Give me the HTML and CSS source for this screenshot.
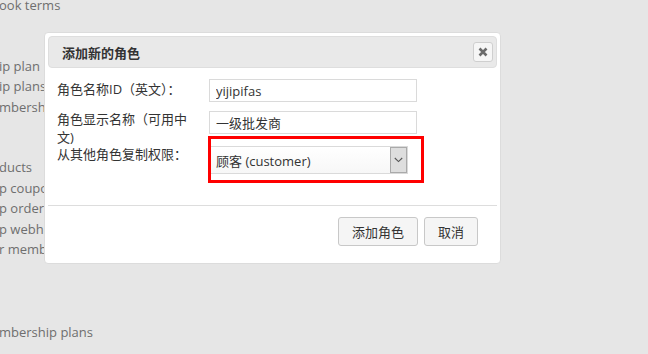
FILE: index.html
```html
<!DOCTYPE html>
<html lang="zh">
<head>
<meta charset="utf-8">
<title>添加新的角色</title>
<link rel="stylesheet" href="styles.css">
</head>
<body>
<ul class="bg-menu">
  <li class="m0">ook terms</li>
  <li class="m1">ip plan</li>
  <li>ip plans</li>
  <li>mbership</li>
  <li class="m2">ducts</li>
  <li>p coupo</li>
  <li>p order</li>
  <li>p webho</li>
  <li>r memb</li>
  <li class="m3">mbership plans</li>
</ul>

<div class="dialog">
  <div class="titlebar">
    <span class="title">添加新的角色</span>
    <button class="close" aria-label="close">
      <svg width="10" height="10" viewBox="0 0 10 10"><path d="M1.5 1.5 L8.5 8.5 M8.5 1.5 L1.5 8.5" stroke="#6b6b6b" stroke-width="2.6" stroke-linecap="butt"/></svg>
    </button>
  </div>
  <div class="content">
    <div class="row r1">
      <label class="lbl">角色名称ID（英文）：</label>
      <div class="field"><input class="txt" type="text" value="yijipifas"></div>
    </div>
    <div class="row r2">
      <label class="lbl">角色显示名称（可用中文)</label>
      <div class="field"><input class="txt" type="text" value="一级批发商"></div>
    </div>
    <div class="row r3">
      <label class="lbl">从其他角色复制权限：</label>
      <div class="field">
        <div class="select">
          <span class="sel-text">顾客 (customer)</span>
          <span class="sel-arrow"><svg width="9" height="6" viewBox="0 0 9 6"><path d="M0.8 1 L4.5 4.6 L8.2 1" fill="none" stroke="#555" stroke-width="1.1"/></svg></span>
        </div>
        <div class="highlight"></div>
      </div>
    </div>
  </div>
  <div class="footer">
    <button class="btn">添加角色</button>
    <button class="btn">取消</button>
  </div>
</div>
</body>
</html>
```
FILE: styles.css
```css
html, body {
  margin: 0;
  padding: 0;
}
body {
  width: 648px;
  height: 354px;
  overflow: hidden;
  background: #e6e6e6;
  font-family: "Open Sans", "Noto Sans CJK SC", sans-serif;
  font-size: 13px;
  color: #333;
  position: relative;
}
.bg-menu {
  list-style: none;
  margin: 0;
  padding: 0;
  color: #6e6e6e;
  font-size: 13px;
  line-height: 20.5px;
}
.bg-menu li {
  margin-left: -1px;
  white-space: nowrap;
}
.bg-menu .m0 {
  margin-top: -5px;
}
.bg-menu .m1 {
  margin-top: 40px;
}
.bg-menu .m2 {
  margin-top: 40px;
}
.bg-menu .m3 {
  margin-top: 62px;
}

.dialog {
  position: absolute;
  left: 44px;
  top: 32px;
  width: 457px;
  height: 232px;
  box-sizing: border-box;
  background: #fff;
  border: 1px solid #dcdcdc;
  border-radius: 4px;
  padding: 3px;
  display: flex;
  flex-direction: column;
}
.titlebar {
  height: 32px;
  box-sizing: border-box;
  background: #e9e9e9;
  border: 1px solid #dedede;
  border-radius: 4px;
  display: flex;
  align-items: center;
  justify-content: space-between;
  padding: 0 3px 0 13px;
}
.title {
  font-weight: bold;
  color: #333;
  font-size: 13px;
}
.close {
  width: 20px;
  height: 20px;
  box-sizing: border-box;
  border: 1px solid #cfcfcf;
  border-radius: 3px;
  background: #f6f6f6;
  padding: 0;
  display: flex;
  align-items: center;
  justify-content: center;
}
.content {
  padding: 11px 0 0 9px;
  display: flex;
  flex-direction: column;
  height: 137px;
  box-sizing: border-box;
}
.row {
  display: flex;
  align-items: flex-start;
}
.lbl {
  width: 140px;
  flex: none;
  line-height: 18px;
  color: #333;
}
.r1 .lbl {
  padding-top: 1px;
}
.r1 {
  height: 31px;
}
.r2 {
  height: 35px;
}
.r2 .field {
  padding-top: 1px;
}
.r3 .field {
  padding-top: 1px;
}
.field {
  margin-left: 12px;
  position: relative;
}
.txt {
  display: block;
  width: 208px;
  height: 23px;
  box-sizing: border-box;
  border: 1px solid #dadada;
  padding: 0 6px;
  margin: 0;
  font-family: "Open Sans", "Noto Sans CJK SC", sans-serif;
  font-size: 13px;
  color: #333;
  background: #fff;
}
.select {
  width: 198px;
  height: 28px;
  margin-left: 1px;
  box-sizing: border-box;
  border: 1px solid #dadada;
  background: linear-gradient(#fff, #f7f7f7);
  display: flex;
  align-items: center;
  justify-content: space-between;
}
.sel-text {
  padding-left: 5px;
  color: #333;
}
.sel-arrow {
  width: 17px;
  height: 26px;
  box-sizing: border-box;
  background: #dedede;
  border: 1px solid #aaa;
  display: flex;
  align-items: center;
  justify-content: center;
}
.highlight {
  position: absolute;
  left: -1px;
  top: -9px;
  width: 216px;
  height: 47px;
  box-sizing: border-box;
  border: 3px solid #ff0000;
}
.footer {
  border-top: 1px solid #dddddd;
  margin-top: 0;
  display: flex;
  justify-content: flex-end;
  gap: 6px;
  padding: 11px 19px 0 0;
}
.btn {
  height: 29px;
  box-sizing: border-box;
  border: 1px solid #c8c8c8;
  border-radius: 3px;
  background: #f5f5f5;
  font-family: "Open Sans", "Noto Sans CJK SC", sans-serif;
  font-size: 13px;
  color: #333;
  padding: 0 13px;
}
```
